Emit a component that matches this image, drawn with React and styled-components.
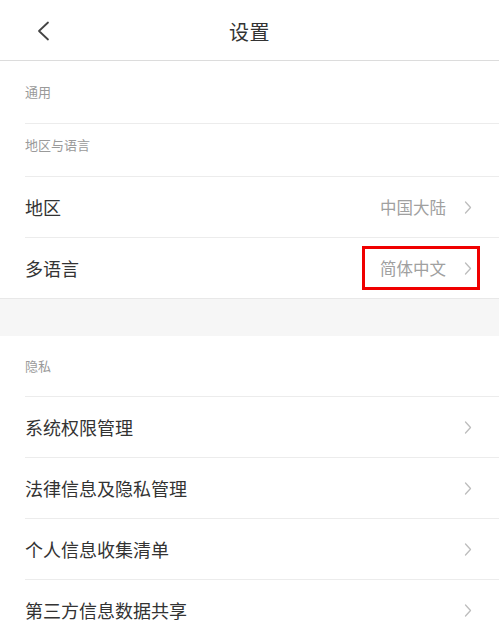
import React from 'react';
import styled, { createGlobalStyle } from 'styled-components';

const GlobalStyle = createGlobalStyle`
  html, body {
    margin: 0;
    padding: 0;
    background: #fff;
  }
  body {
    font-family: "Noto Sans CJK SC", "Noto Sans", sans-serif;
    -webkit-font-smoothing: antialiased;
  }
`;

const Page = styled.div`
  width: 100%;
  background: #fff;
  overflow: hidden;
`;

const Header = styled.header`
  display: grid;
  grid-template-columns: 1fr auto 1fr;
  align-items: center;
  height: 61px;
  padding-top: 2px;
  box-sizing: border-box;
  border-bottom: 1px solid #dcdcdc;
`;

const BackButton = styled.button`
  justify-self: start;
  display: flex;
  align-items: center;
  margin-left: 36px;
  padding: 0;
  border: none;
  background: none;
  color: #444;
  cursor: pointer;
`;

const Title = styled.h1`
  margin: 0;
  font-size: 20px;
  font-weight: 400;
  color: #333;
  letter-spacing: 0.5px;
`;

const Group = styled.section`
  background: #fff;
  border-bottom: ${(p) => (p.$closed ? '1px solid #e8e8e8' : 'none')};
`;

const SectionLabel = styled.div`
  margin-left: 25px;
  height: ${(p) => p.$height}px;
  box-sizing: border-box;
  padding-top: ${(p) => p.$top}px;
  font-size: 13px;
  line-height: 18px;
  color: #9a9a9a;
  border-bottom: 1px solid #ececec;
`;

const Row = styled.div`
  display: flex;
  align-items: center;
  justify-content: space-between;
  margin-left: 25px;
  padding-right: 27px;
  height: 60px;
  border-bottom: ${(p) => (p.$last ? 'none' : '1px solid #ececec')};
`;

const RowTitle = styled.span`
  font-size: 18px;
  color: #333;
`;

const Trailing = styled.div`
  position: relative;
  display: flex;
  align-items: center;
  gap: 18px;

  ${(p) =>
    p.$marked &&
    `
    &::after {
      content: "";
      position: absolute;
      left: -18px;
      right: -8px;
      top: -10px;
      bottom: -10px;
      border: 3px solid #f00000;
    }
  `}
`;

const Value = styled.span`
  font-size: 16.5px;
  line-height: 24px;
  color: #a0a0a0;
`;

const Spacer = styled.div`
  height: 37px;
  background: #f6f6f6;
`;

function Chevron() {
  return (
    <svg width="8" height="13" viewBox="0 0 8 13" fill="none">
      <path d="M1.5 1L6.5 6.5L1.5 12" stroke="#bdbdbd" strokeWidth="1.3" strokeLinecap="round" strokeLinejoin="round" />
    </svg>
  );
}

function BackIcon() {
  return (
    <svg width="14" height="20" viewBox="0 0 14 20" fill="none">
      <path d="M12 1.5L3 10L12 18.5" stroke="#444" strokeWidth="1.8" strokeLinecap="round" strokeLinejoin="round" />
    </svg>
  );
}

const privacyItems = ['系统权限管理', '法律信息及隐私管理', '个人信息收集清单', '第三方信息数据共享'];

function App() {
  return (
    <Page>
      <GlobalStyle />
      <Header>
        <BackButton aria-label="返回">
          <BackIcon />
        </BackButton>
        <Title>设置</Title>
        <span />
      </Header>

      <Group $closed>
        <SectionLabel $height={63} $top={22}>通用</SectionLabel>
        <SectionLabel $height={53} $top={12}>地区与语言</SectionLabel>
        <Row>
          <RowTitle>地区</RowTitle>
          <Trailing>
            <Value>中国大陆</Value>
            <Chevron />
          </Trailing>
        </Row>
        <Row $last>
          <RowTitle>多语言</RowTitle>
          <Trailing $marked>
            <Value>简体中文</Value>
            <Chevron />
          </Trailing>
        </Row>
      </Group>

      <Spacer />

      <Group>
        <SectionLabel $height={61} $top={21}>隐私</SectionLabel>
        {privacyItems.map((item, i) => (
          <Row key={item} $last={i === privacyItems.length - 1}>
            <RowTitle>{item}</RowTitle>
            <Trailing>
              <Chevron />
            </Trailing>
          </Row>
        ))}
      </Group>
    </Page>
  );
}

export default App;
